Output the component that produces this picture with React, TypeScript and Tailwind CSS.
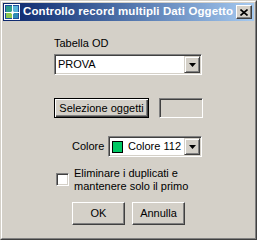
const RAISED =
  'border border-t-white border-l-white border-r-[#404040] border-b-[#404040] shadow-[inset_-1px_-1px_#808080] bg-[#D4D0C8]';
const SUNKEN =
  'border border-t-[#808080] border-l-[#808080] border-r-white border-b-white shadow-[inset_1px_1px_#404040,inset_-1px_-1px_#D4D0C8]';
const DROP_BTN =
  'border border-t-[#D4D0C8] border-l-[#D4D0C8] border-r-[#404040] border-b-[#404040] shadow-[inset_1px_1px_white,inset_-1px_-1px_#808080] bg-[#D4D0C8]';

function DropArrow() {
  return (
    <svg width="7" height="4" viewBox="0 0 7 4">
      <polygon points="0,0 7,0 3.5,4" fill="#000" />
    </svg>
  );
}

function AppIcon() {
  return (
    <svg width="16" height="16" viewBox="0 0 16 16" className="shrink-0">
      <rect x="0" y="0" width="16" height="16" fill="#fff" />
      <rect x="1" y="1" width="14" height="14" fill="#1c4f9c" />
      <rect x="2" y="2" width="6" height="6" fill="#2e9c8c" />
      <rect x="9" y="2" width="5" height="6" fill="#5ab4d8" />
      <rect x="2" y="9" width="6" height="5" fill="#8cc850" />
      <rect x="9" y="9" width="5" height="5" fill="#2e8cb4" />
      <rect x="8" y="1" width="1" height="14" fill="#fff" />
      <rect x="1" y="8" width="14" height="1" fill="#fff" />
      <circle cx="8.5" cy="8.5" r="1.6" fill="#fff" />
    </svg>
  );
}

function Combo({ width, children }: { width: string; children: React.ReactNode }) {
  return (
    <div className={`${SUNKEN} ${width} h-[21px] bg-white p-px flex items-stretch`}>
      <div className="flex-1 flex items-center min-w-0">{children}</div>
      <div className={`${DROP_BTN} w-[16px] flex items-center justify-center`}>
        <DropArrow />
      </div>
    </div>
  );
}

export default function App() {
  return (
    <div className="w-[257px] h-[240px] bg-[#D4D0C8] border border-t-[#D4D0C8] border-l-[#D4D0C8] border-r-[#404040] border-b-[#404040] font-['Liberation_Sans',Arial,sans-serif] text-[11px] text-black">
      <div className="h-full border border-t-white border-l-white border-r-[#808080] border-b-[#808080] p-px flex flex-col">
        {/* title bar */}
        <div className="h-[18px] flex items-center pl-px pr-[2px] bg-gradient-to-r from-[#0A246A] to-[#A6CAF0]">
          <AppIcon />
          <span className="ml-[3px] text-white font-bold text-[11.5px] tracking-[0.1px] whitespace-nowrap leading-none">
            Controllo record multipli Dati Oggetto
          </span>
          <div className={`${RAISED} ml-auto w-[16px] h-[14px] flex items-center justify-center`}>
            <svg width="8" height="7" viewBox="0 0 8 7">
              <path d="M0.5 0.5 L7.5 6.5 M7.5 0.5 L0.5 6.5" stroke="#000" strokeWidth="1.6" />
            </svg>
          </div>
        </div>

        {/* body */}
        <div className="flex flex-col pl-[51px]">
          <div className="mt-[16px] leading-[13px]">Tabella OD</div>
          <div className="mt-[4px]">
            <Combo width="w-[148px]">
              <span className="pl-[2px] leading-none">PROVA</span>
            </Combo>
          </div>

          <div className="mt-[23px] flex items-center gap-[10px]">
            <button className="w-[95px] h-[20px] border border-black shadow-[inset_1px_1px_white,inset_-1px_-1px_#404040,inset_-2px_-2px_#808080] bg-[#D4D0C8] leading-none">
              Selezione oggetti
            </button>
            <div className={`${SUNKEN} w-[44px] h-[20px] bg-[#D4D0C8]`} />
          </div>

          <div className="mt-[18px] ml-[18px] flex items-center">
            <span className="w-[36px] leading-none">Colore</span>
            <Combo width="w-[94px]">
              <span className="ml-[2px] w-[11px] h-[12px] border border-black bg-[#00C864]" />
              <span className="ml-[5px] leading-none">Colore 112</span>
            </Combo>
          </div>

          <div className="mt-[10px] ml-[2px] flex items-start">
            <div className={`${SUNKEN} mt-[6px] w-[13px] h-[13px] bg-white shrink-0`} />
            <div className="ml-[5px] leading-[13px]">
              Eliminare i duplicati e
              <br />
              mantenere solo il primo
            </div>
          </div>

          <div className="mt-[9px] ml-[18px] flex gap-[7px]">
            <button className={`${RAISED} w-[53px] h-[23px] leading-none`}>OK</button>
            <button className={`${RAISED} w-[53px] h-[23px] leading-none`}>Annulla</button>
          </div>
        </div>
      </div>
    </div>
  );
}
